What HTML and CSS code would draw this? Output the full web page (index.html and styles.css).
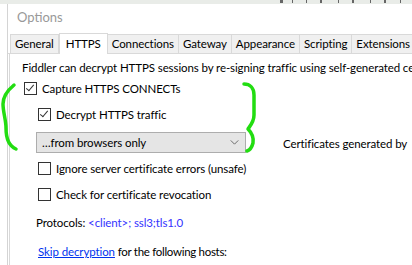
FILE: index.html
```html
<!DOCTYPE html>
<html lang="en">
<head>
    <meta charset="UTF-8">
    <link rel="stylesheet" href="styles.css">
</head>
<body>

<div class="top-strip">
    <svg class="strip-marks" viewBox="0 0 132 4" fill="#666">
        <rect x="0" y="0" width="3" height="3"/>
        <rect x="12" y="0" width="1" height="3"/>
        <rect x="26" y="0" width="1" height="3"/>
        <rect x="40" y="0" width="2" height="3"/>
        <rect x="58" y="0" width="1" height="3"/>
        <rect x="72" y="0" width="2" height="3"/>
        <rect x="90" y="0" width="1" height="3"/>
        <rect x="104" y="0" width="2" height="3"/>
        <rect x="120" y="0" width="1" height="3"/>
    </svg>
</div>

<div class="window">
    <div class="title">Options</div>

    <!-- Pestañas -->
    <div class="tabs">
        <div class="tab">General</div>
        <div class="tab active">HTTPS</div>
        <div class="tab">Connections</div>
        <div class="tab">Gateway</div>
        <div class="tab">Appearance</div>
        <div class="tab">Scripting</div>
        <div class="tab">Extensions</div>
    </div>

    <div class="panel">
        <p class="intro">Fiddler can decrypt HTTPS sessions by re-signing traffic using self-generated certi</p>

        <label class="check">
            <span class="box checked"></span>
            Capture HTTPS CONNECTs
        </label>

        <div class="indent">
            <label class="check">
                <span class="box checked"></span>
                Decrypt HTTPS traffic
            </label>

            <div class="select-row">
                <div class="select">
                    <span>…from browsers only</span>
                    <svg class="chevron" viewBox="0 0 10 6" fill="none" stroke="#555" stroke-width="1">
                        <polyline points="0.5 0.5 5 5 9.5 0.5"/>
                    </svg>
                </div>
                <span class="cert-text">Certificates generated by</span>
            </div>

            <label class="check">
                <span class="box"></span>
                Ignore server certificate errors (unsafe)
            </label>

            <label class="check">
                <span class="box"></span>
                Check for certificate revocation
            </label>

            <p class="protocols">Protocols: <span class="proto-link">&lt;client&gt;; ssl3;tls1.0</span></p>

            <p class="skip"><a href="#" class="link">Skip decryption</a> <span class="skip-rest">for the following hosts:</span></p>
            <div class="hosts"></div>
        </div>
    </div>
</div>

<!-- Llaves verdes dibujadas encima -->
<svg class="marks" viewBox="0 0 412 265" fill="none" stroke="#22dd11" stroke-width="3.5" stroke-linecap="round" stroke-linejoin="round">
    <path d="M14 85 C8 90, 3 97, 3 104 C3 112, 6 120, 6 128 C6 138, 9 146, 16 149"/>
    <path d="M244 84 C250 84, 254 88, 254 95 L254 115 C254 122, 250 126, 248 129 C252 133, 254 137, 253 143 C252 147, 250 150, 247 151"/>
</svg>

</body>
</html>
```

FILE: styles.css
```css
/* Estilos generales */
body {
    margin: 0;
    width: 412px;
    height: 265px;
    overflow: hidden;
    background: white;
    font-family: Lato, "Liberation Sans", sans-serif;
    font-size: 11.5px;
    letter-spacing: -0.1px;
    color: #000;
    position: relative;
}

.top-strip {
    height: 4px;
    background-color: #e9ece8;
    display: flex;
    justify-content: flex-end;
}

.strip-marks {
    width: 132px;
    height: 4px;
}

.window {
    margin-left: 7px;
    border-left: 1px solid #d4d4d4;
    height: 261px;
}

.title {
    padding: 4px 0 0 9px;
    height: 25px;
    font-size: 13px;
    line-height: 18px;
    color: #999;
    letter-spacing: 0;
}

/* Pestañas */
.tabs {
    display: flex;
    padding-left: 2px;
    height: 20px;
    align-items: flex-end;
    border-bottom: 1px solid #d9d9d9;
}

.tab {
    height: 19px;
    line-height: 18px;
    padding: 0 4px;
    background-color: #f0f0f0;
    border: 1px solid #d9d9d9;
    border-bottom: none;
    border-left: none;
    box-sizing: border-box;
    white-space: nowrap;
    flex-shrink: 0;
}

.tab:first-child {
    border-left: 1px solid #d9d9d9;
}

.tab.active {
    height: 21px;
    line-height: 19px;
    background-color: white;
    margin-bottom: -1px;
    padding: 0 6px;
    border-left: 1px solid #d9d9d9;
}

/* Panel */
.panel {
    padding: 6px 0 0 12px;
    border-left: 1px solid #d9d9d9;
    margin-left: 1px;
    height: 220px;
    white-space: nowrap;
}

.intro {
    margin: 0 0 4px;
    line-height: 16px;
}

.check {
    display: flex;
    align-items: center;
    gap: 5px;
    height: 16px;
    margin: 0 0 10px 2px;
}

.box {
    width: 11px;
    height: 11px;
    border: 1px solid #333;
    background: white;
    position: relative;
    flex-shrink: 0;
}

.box.checked::after {
    content: "";
    position: absolute;
    left: 3px;
    top: 0px;
    width: 3px;
    height: 7px;
    border: solid #333;
    border-width: 0 1px 1px 0;
    transform: rotate(40deg);
}

.indent {
    padding-left: 16px;
}

.indent .check {
    margin-left: 0;
}

.select-row {
    display: flex;
    align-items: center;
    gap: 37px;
    margin: 0 0 7px -2px;
}

.select {
    width: 197px;
    height: 19px;
    flex-shrink: 0;
    border: 1px solid #adadad;
    background-color: #e5e5e5;
    display: flex;
    align-items: center;
    justify-content: space-between;
    padding: 0 6px 0 5px;
}

.chevron {
    width: 9px;
    height: 5px;
}

.cert-text {
    padding-top: 2px;
}

.protocols {
    margin: 13px 0 0 -2px;
    line-height: 16px;
}

.proto-link {
    color: #3333ff;
}

.skip {
    margin: 13px 0 0 0;
    line-height: 16px;
}

.link {
    color: #0033ee;
    text-decoration: underline;
}

.skip-rest {
    letter-spacing: -0.3px;
}

.hosts {
    margin: 5px 0 0 -2px;
    border-top: 1px solid #7a7a7a;
    height: 10px;
}

.marks {
    position: absolute;
    left: 0;
    top: 0;
    width: 412px;
    height: 265px;
    pointer-events: none;
}
```
